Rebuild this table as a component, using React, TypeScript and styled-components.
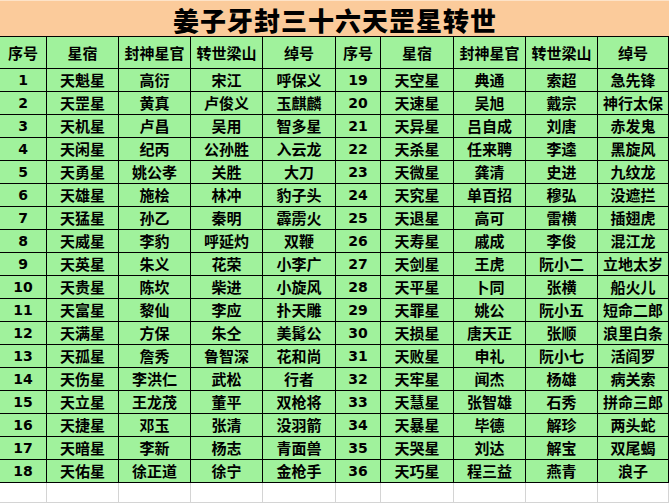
import React from "react";
import styled, { createGlobalStyle } from "styled-components";

const GlobalStyle = createGlobalStyle`
  html, body {
    margin: 0;
    padding: 0;
    background: #ffffff;
    overflow: hidden;
  }
`;

const CJK = `"Noto Sans CJK SC", "Noto Sans", sans-serif`;

const COLS = "47px 72px 72px 72px 73px 45px 73px 72px 72px 71px";

const Sheet = styled.div`
  display: grid;
  grid-template-columns: ${COLS};
  width: 669px;
  color: #000;
  font-family: ${CJK};
`;

const TitleCell = styled.div`
  grid-column: 1 / -1;
  height: 37px;
  box-sizing: border-box;
  border-top: 1px solid #fde3c8;
  border-bottom: 1px solid #000;
  background: #fbcb9b;
  display: flex;
  align-items: center;
  justify-content: center;
  font-size: 26px;
  font-weight: 900;
  letter-spacing: 1px;
  line-height: 36px;
  padding-top: 2px;
  padding-left: 1px;
`;

const Cell = styled.div<{ $head?: boolean; $num?: boolean }>`
  height: ${(p) => (p.$head ? "32px" : "23px")};
  box-sizing: border-box;
  border-right: 1px solid #000;
  border-bottom: 1px solid #000;
  background: #a0f29c;
  display: flex;
  align-items: center;
  justify-content: center;
  white-space: nowrap;
  overflow: hidden;
  font-family: ${(p) => (p.$num ? `"DejaVu Sans", ${CJK}` : CJK)};
  font-size: ${(p) => (p.$num ? "14px" : "15px")};
  font-weight: 700;
  line-height: 1;
  padding-bottom: 1px;
`;

const BlankCell = styled.div`
  height: 20px;
  box-sizing: border-box;
  border-right: 1px solid #d4d4d4;
  border-bottom: 1px solid #d4d4d4;
  background: #fff;
`;

type Row = [number, string, string, string, string];

const left: Row[] = [
  [1, "天魁星", "高衍", "宋江", "呼保义"],
  [2, "天罡星", "黄真", "卢俊义", "玉麒麟"],
  [3, "天机星", "卢昌", "吴用", "智多星"],
  [4, "天闲星", "纪丙", "公孙胜", "入云龙"],
  [5, "天勇星", "姚公孝", "关胜", "大刀"],
  [6, "天雄星", "施桧", "林冲", "豹子头"],
  [7, "天猛星", "孙乙", "秦明", "霹雳火"],
  [8, "天威星", "李豹", "呼延灼", "双鞭"],
  [9, "天英星", "朱义", "花荣", "小李广"],
  [10, "天贵星", "陈坎", "柴进", "小旋风"],
  [11, "天富星", "黎仙", "李应", "扑天雕"],
  [12, "天满星", "方保", "朱仝", "美髯公"],
  [13, "天孤星", "詹秀", "鲁智深", "花和尚"],
  [14, "天伤星", "李洪仁", "武松", "行者"],
  [15, "天立星", "王龙茂", "董平", "双枪将"],
  [16, "天捷星", "邓玉", "张清", "没羽箭"],
  [17, "天暗星", "李新", "杨志", "青面兽"],
  [18, "天佑星", "徐正道", "徐宁", "金枪手"],
];

const right: Row[] = [
  [19, "天空星", "典通", "索超", "急先锋"],
  [20, "天速星", "吴旭", "戴宗", "神行太保"],
  [21, "天异星", "吕自成", "刘唐", "赤发鬼"],
  [22, "天杀星", "任来聘", "李逵", "黑旋风"],
  [23, "天微星", "龚清", "史进", "九纹龙"],
  [24, "天究星", "单百招", "穆弘", "没遮拦"],
  [25, "天退星", "高可", "雷横", "插翅虎"],
  [26, "天寿星", "戚成", "李俊", "混江龙"],
  [27, "天剑星", "王虎", "阮小二", "立地太岁"],
  [28, "天平星", "卜同", "张横", "船火儿"],
  [29, "天罪星", "姚公", "阮小五", "短命二郎"],
  [30, "天损星", "唐天正", "张顺", "浪里白条"],
  [31, "天败星", "申礼", "阮小七", "活阎罗"],
  [32, "天牢星", "闻杰", "杨雄", "病关索"],
  [33, "天慧星", "张智雄", "石秀", "拼命三郎"],
  [34, "天暴星", "毕德", "解珍", "两头蛇"],
  [35, "天哭星", "刘达", "解宝", "双尾蝎"],
  [36, "天巧星", "程三益", "燕青", "浪子"],
];

const headers = ["序号", "星宿", "封神星官", "转世梁山", "绰号"];

export default function App() {
  return (
    <>
      <GlobalStyle />
      <Sheet>
        <TitleCell>姜子牙封三十六天罡星转世</TitleCell>
        {[...headers, ...headers].map((h, i) => (
          <Cell key={`h${i}`} $head>
            {h}
          </Cell>
        ))}
        {left.map((row, r) =>
          [...row, ...right[r]].map((v, c) => (
            <Cell key={`${r}-${c}`} $num={typeof v === "number"}>
              {v}
            </Cell>
          ))
        )}
        {Array.from({ length: 10 }).map((_, i) => (
          <BlankCell key={`b${i}`} />
        ))}
      </Sheet>
    </>
  );
}
